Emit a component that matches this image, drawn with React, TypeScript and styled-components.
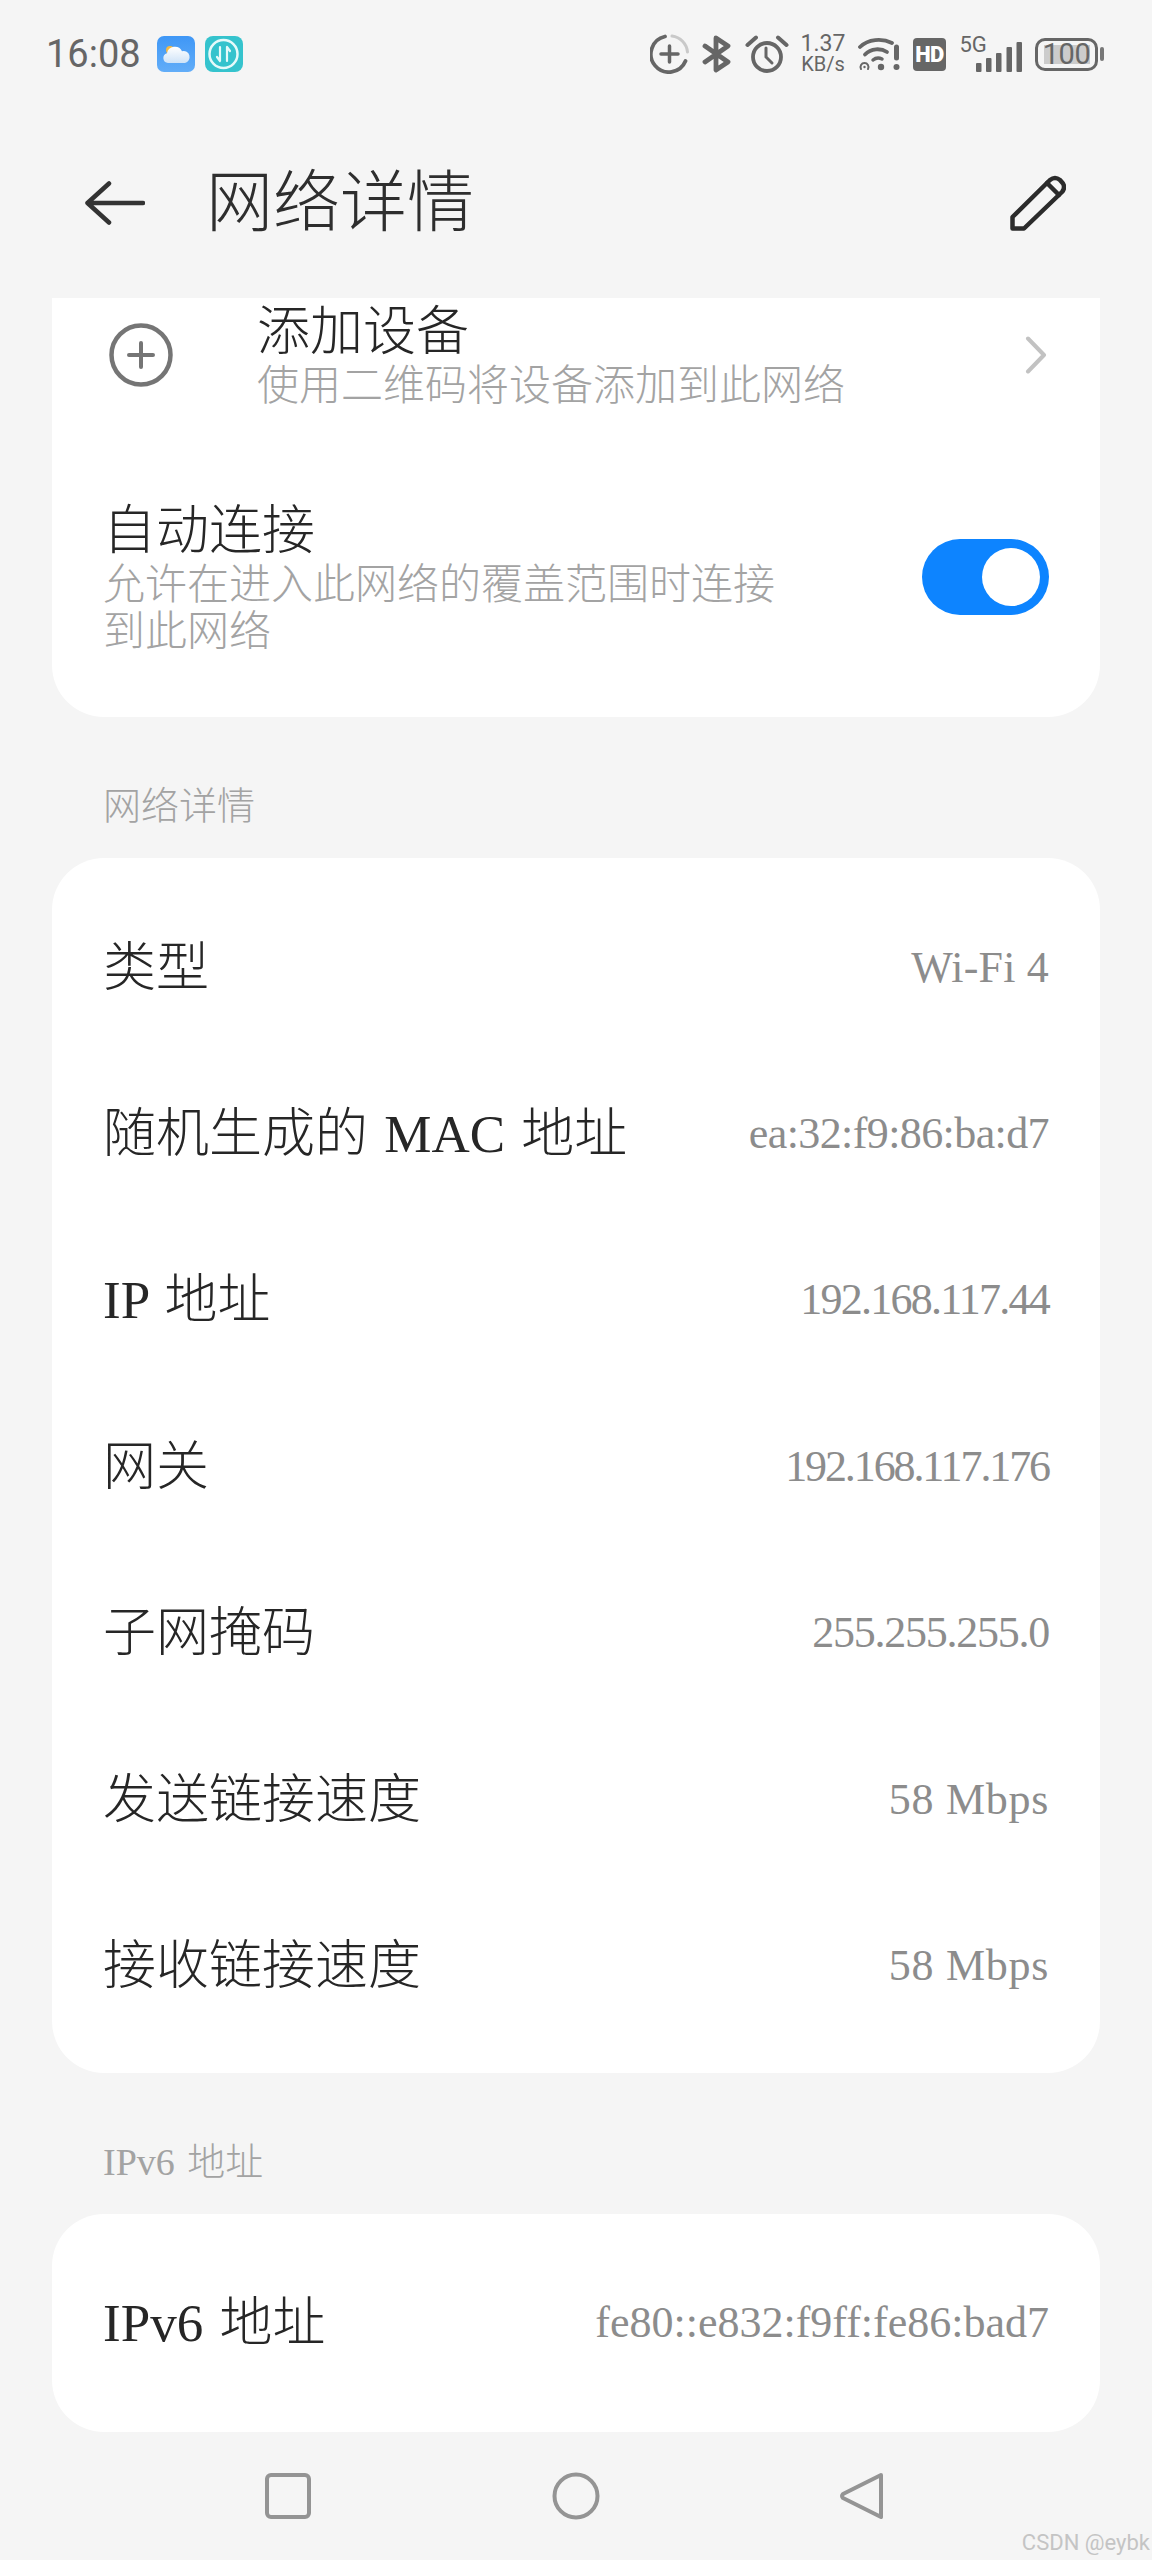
import styled, { createGlobalStyle } from 'styled-components';

type DetailRow = { label: string; value: string; tracking: number };

const detailRows: DetailRow[] = [
  { label: '类型', value: 'Wi-Fi 4', tracking: 0.2 },
  { label: '随机生成的 MAC 地址', value: 'ea:32:f9:86:ba:d7', tracking: -0.6 },
  { label: 'IP 地址', value: '192.168.117.44', tracking: -1.75 },
  { label: '网关', value: '192.168.117.176', tracking: -2.1 },
  { label: '子网掩码', value: '255.255.255.0', tracking: -1.25 },
  { label: '发送链接速度', value: '58 Mbps', tracking: 0.7 },
  { label: '接收链接速度', value: '58 Mbps', tracking: 0.7 },
];

const GlobalStyle = createGlobalStyle`
  html, body {
    margin: 0;
    padding: 0;
    background: #f5f5f5;
  }
  * {
    box-sizing: border-box;
  }
`;

export default function App() {
  return (
    <Page>
      <GlobalStyle />
      <StatusBar>
        <StatusLeft>
          <Clock>16:08</Clock>
          <WeatherIcon />
          <TransferIcon />
        </StatusLeft>
        <StatusRight>
          <RingPlusIcon />
          <BluetoothIcon />
          <AlarmIcon />
          <Speed>
            <span>1.37</span>
            <SpeedUnit>KB/s</SpeedUnit>
          </Speed>
          <WifiIcon />
          <HdBadge>HD</HdBadge>
          <Signal>
            <SignalLabel>5G</SignalLabel>
            <SignalIcon />
          </Signal>
          <Battery>
            <BatteryBody>100</BatteryBody>
            <BatteryCap />
          </Battery>
        </StatusRight>
      </StatusBar>

      <Header>
        <BackIcon />
        <Title>网络详情</Title>
        <PencilIcon />
      </Header>

      <TopCard>
        <AddRow>
          <AddIcon />
          <AddText>
            <RowTitle>添加设备</RowTitle>
            <RowSub>使用二维码将设备添加到此网络</RowSub>
          </AddText>
          <ChevronIcon />
        </AddRow>
        <AutoRow>
          <AutoText>
            <RowTitle>自动连接</RowTitle>
            <RowSub>允许在进入此网络的覆盖范围时连接到此网络</RowSub>
          </AutoText>
          <Toggle>
            <Knob />
          </Toggle>
        </AutoRow>
      </TopCard>

      <SectionLabel>网络详情</SectionLabel>
      <DetailCard>
        {detailRows.map((row) => (
          <Row key={row.label}>
            <RowLabel>{row.label}</RowLabel>
            <RowValue $tracking={row.tracking}>{row.value}</RowValue>
          </Row>
        ))}
      </DetailCard>

      <SectionLabel>IPv6 地址</SectionLabel>
      <Ipv6Card>
        <RowLabel>IPv6 地址</RowLabel>
        <RowValue $tracking={0}>fe80::e832:f9ff:fe86:bad7</RowValue>
      </Ipv6Card>

      <NavBar>
        <NavIcon viewBox="0 0 48 48">
          <rect x="3" y="3" width="42" height="42" rx="4" />
        </NavIcon>
        <NavIcon viewBox="0 0 48 48">
          <circle cx="24" cy="24" r="21.5" />
        </NavIcon>
        <NavIcon viewBox="0 0 48 48">
          <path d="M41 3 L3 22 Q1 24 3 26 L41 45 Z" strokeLinejoin="round" />
        </NavIcon>
      </NavBar>
      <Watermark>CSDN @eybk</Watermark>
    </Page>
  );
}

function WeatherIcon() {
  return (
    <AppIcon viewBox="0 0 38 36">
      <defs>
        <linearGradient id="sky" x1="0" y1="0" x2="0" y2="1">
          <stop offset="0" stopColor="#3f97f6" />
          <stop offset="1" stopColor="#62adf8" />
        </linearGradient>
        <linearGradient id="cloud" x1="0" y1="0" x2="0" y2="1">
          <stop offset="0" stopColor="#ffffff" />
          <stop offset="1" stopColor="#cfe3f7" />
        </linearGradient>
      </defs>
      <rect width="38" height="36" rx="7" fill="url(#sky)" />
      <circle cx="13" cy="14" r="4" fill="#f5b942" />
      <path
        d="M11 27 a5 5 0 0 1 -1 -9.800 a8 8 0 0 1 15 -2 a6 6 0 0 1 3 11.800 Z"
        fill="url(#cloud)"
      />
    </AppIcon>
  );
}

function TransferIcon() {
  return (
    <AppIcon viewBox="0 0 38 36">
      <rect width="38" height="36" rx="8" fill="#35c3cd" />
      <circle cx="18.500" cy="18" r="14" fill="none" stroke="#e6fafa" strokeWidth="2.500" />
      <path
        d="M15 11 v14 M15 25 l-3 -4 M22 25 v-14 M22 11 l3 4"
        fill="none"
        stroke="#e6fafa"
        strokeWidth="2.200"
        strokeLinecap="round"
      />
    </AppIcon>
  );
}

function RingPlusIcon() {
  return (
    <StatusSvg $w={39} $h={40} viewBox="0 0 39 40" fill="none" strokeLinecap="round">
      <path d="M35.500 27 A18 18 0 1 1 15 2.500" stroke="#666" strokeWidth="3.800" />
      <path d="M22 2 A18 18 0 0 1 37.500 18" stroke="#c9c9c9" strokeWidth="3" />
      <path d="M11 20 H28 M19.500 12 V28" stroke="#666" strokeWidth="3.500" />
    </StatusSvg>
  );
}

function BluetoothIcon() {
  return (
    <StatusSvg $w={29} $h={38} viewBox="0 0 29 38" fill="none" strokeLinejoin="round" strokeLinecap="round">
      <path d="M3 11 L26 27 L14 35 V3 L26 11 L3 27" stroke="#666" strokeWidth="4.800" />
    </StatusSvg>
  );
}

function AlarmIcon() {
  return (
    <StatusSvg $w={44} $h={38} viewBox="0 0 44 38" fill="none" stroke="#666" strokeLinecap="round">
      <circle cx="22" cy="22" r="14" strokeWidth="3.800" />
      <path d="M21 13 V22 L27 28" strokeWidth="3" />
      <path d="M2.500 10 L11 2.500 M41.500 10 L33 2.500" strokeWidth="4" />
    </StatusSvg>
  );
}

function WifiIcon() {
  return (
    <StatusSvg $w={42} $h={34} viewBox="0 0 42 34" fill="none" stroke="#666" strokeLinecap="round">
      <path d="M2 10 C10 2 24 1 34 6" strokeWidth="3.800" />
      <path d="M7 17.500 C13 11 23 11 29 15" strokeWidth="3.800" />
      <path d="M15 23 C18 20.500 21 20.500 24 22" strokeWidth="3.500" />
      <circle cx="23" cy="30" r="3.200" fill="#666" stroke="none" />
      <path d="M38.500 10 V21" strokeWidth="5" />
      <circle cx="38.500" cy="30" r="3" fill="#666" stroke="none" />
      <path d="M3 32 a4 4 0 1 1 7 0" strokeWidth="2" />
      <circle cx="6.500" cy="30" r="1.200" fill="#666" stroke="none" />
    </StatusSvg>
  );
}

function SignalIcon() {
  return (
    <SignalBars viewBox="0 0 46 30" fill="#666">
      <rect x="0" y="21" width="5.500" height="9" rx="1" />
      <rect x="10" y="16" width="5.500" height="14" rx="1" />
      <rect x="20" y="11" width="5.500" height="19" rx="1" />
      <rect x="30.500" y="5" width="5.500" height="25" rx="1" />
      <rect x="40.500" y="0" width="5.500" height="30" rx="1" />
    </SignalBars>
  );
}

function BackIcon() {
  return (
    <HeaderSvg $w={60} $h={44} $ml={85} viewBox="0 0 60 44" fill="none" stroke="#333" strokeWidth="4.500" strokeLinecap="round" strokeLinejoin="round">
      <path d="M2.500 22 H58 M24 2.500 L2.500 22 L24 41.500" />
    </HeaderSvg>
  );
}

function PencilIcon() {
  return (
    <HeaderSvg $w={56} $h={56} $ml={534} viewBox="0 0 56 56" fill="none" stroke="#2b2b2b" strokeWidth="4.500" strokeLinejoin="round" strokeLinecap="round">
      <path d="M2.500 53.500 V42 L40 5 Q45 1 50 5 L53 8.500 Q55.500 13 52 17 L14 53.500 Z" />
      <path d="M37 8 L49 20" />
    </HeaderSvg>
  );
}

function AddIcon() {
  return (
    <AddSvg viewBox="0 0 64 64" fill="none" stroke="#757575" strokeLinecap="round">
      <circle cx="32" cy="32" r="29.500" strokeWidth="4.500" />
      <path d="M20 32 H44 M32 20 V44" strokeWidth="4" />
    </AddSvg>
  );
}

function ChevronIcon() {
  return (
    <ChevronSvg viewBox="0 0 22 38" fill="none" stroke="#c2c2c2" strokeWidth="4" strokeLinecap="round" strokeLinejoin="round">
      <path d="M3 2.500 L19 19 L3 35.500" />
    </ChevronSvg>
  );
}

const SERIF_CJK = `"Liberation Serif", "Noto Sans CJK SC", serif`;
const SANS = `Roboto, "Noto Sans", sans-serif`;

const Page = styled.div`
  position: relative;
  width: 1152px;
  height: 2560px;
  overflow: hidden;
  background: #f5f5f5;
  font-family: ${SERIF_CJK};
`;

const StatusBar = styled.div`
  display: flex;
  align-items: center;
  justify-content: space-between;
  height: 108px;
  padding: 0 48px 0 46px;
  font-family: ${SANS};
  color: #666;
`;

const StatusLeft = styled.div`
  display: flex;
  align-items: center;
`;

const Clock = styled.span`
  width: 111px;
  font-size: 38px;
  line-height: 1;
`;

const AppIcon = styled.svg`
  display: block;
  width: 38px;
  height: 36px;
  margin-right: 10px;
`;

const StatusRight = styled.div`
  display: flex;
  align-items: center;
  gap: 13.500px;
`;

const StatusSvg = styled.svg<{ $w: number; $h: number }>`
  display: block;
  flex: none;
  width: ${(p) => p.$w}px;
  height: ${(p) => p.$h}px;
`;

const Speed = styled.div`
  display: flex;
  flex-direction: column;
  align-items: center;
  width: 42px;
  font-size: 23px;
  line-height: 20px;
`;

const SpeedUnit = styled.span`
  font-size: 20px;
`;

const HdBadge = styled.div`
  display: flex;
  align-items: center;
  justify-content: center;
  width: 33px;
  height: 33px;
  border-radius: 4px;
  background: #666;
  color: #fff;
  font-size: 22px;
  font-weight: 900;
  letter-spacing: -0.500px;
`;

const Signal = styled.div`
  display: grid;
  width: 62px;
  height: 36px;
`;

const SignalLabel = styled.span`
  grid-area: 1 / 1;
  justify-self: start;
  align-self: start;
  font-size: 22px;
  line-height: 18px;
  white-space: nowrap;
`;

const SignalBars = styled.svg`
  grid-area: 1 / 1;
  justify-self: end;
  align-self: end;
  display: block;
  width: 46px;
  height: 30px;
`;

const Battery = styled.div`
  display: flex;
  align-items: center;
  gap: 2px;
  width: 69px;
`;

const BatteryBody = styled.div`
  display: flex;
  align-items: center;
  justify-content: center;
  width: 63px;
  height: 33px;
  border: 3.500px solid #666;
  border-radius: 10px;
  background: linear-gradient(#ccc, #ccc) center / 46px 19px no-repeat;
  font-size: 29px;
  line-height: 1;
  letter-spacing: -0.500px;
  color: #666;
`;

const BatteryCap = styled.div`
  width: 4px;
  height: 14px;
  border-radius: 2px;
  background: #777;
`;

const Header = styled.div`
  display: flex;
  align-items: center;
  height: 190px;
`;

const HeaderSvg = styled.svg<{ $w: number; $h: number; $ml: number }>`
  display: block;
  flex: none;
  width: ${(p) => p.$w}px;
  height: ${(p) => p.$h}px;
  margin-left: ${(p) => p.$ml}px;
`;

const Title = styled.h1`
  width: 272px;
  margin: 0 -2px 0 61px;
  font-size: 67px;
  font-weight: 300;
  line-height: 1;
  color: #2e2e2e;
`;

const Card = styled.div`
  width: 1048px;
  margin-left: 52px;
  background: #fff;
  border-radius: 52px;
`;

const TopCard = styled(Card)`
  height: 419px;
  border-radius: 0 0 52px 52px;
`;

const AddRow = styled.div`
  display: flex;
  align-items: flex-start;
  height: 177px;
  padding: 8px 53px 0 57px;
`;

const AddSvg = styled.svg`
  display: block;
  flex: none;
  width: 64px;
  height: 64px;
  margin-top: 17px;
`;

const AddText = styled.div`
  flex: 1;
  margin-left: 84px;
`;

const RowTitle = styled.div`
  font-size: 53px;
  font-weight: 300;
  line-height: 52px;
  color: #262626;
`;

const RowSub = styled.div`
  margin-top: 5px;
  font-size: 42px;
  font-weight: 300;
  line-height: 47px;
  color: #a3a3a3;
`;

const ChevronSvg = styled.svg`
  display: block;
  flex: none;
  width: 22px;
  height: 38px;
  margin-top: 30px;
`;

const AutoRow = styled.div`
  display: flex;
  align-items: center;
  justify-content: space-between;
  padding: 30px 51px 0 51px;
`;

const AutoText = styled.div`
  width: 680px;
`;

const Toggle = styled.div`
  display: flex;
  align-items: center;
  justify-content: flex-end;
  width: 127px;
  height: 76px;
  margin-bottom: 7px;
  padding-right: 9px;
  border-radius: 38px;
  background: #0d84ff;
`;

const Knob = styled.div`
  width: 58px;
  height: 58px;
  border-radius: 50%;
  background: #fff;
`;

const SectionLabel = styled.div`
  height: 141px;
  padding: 67px 0 0 103px;
  font-size: 38px;
  font-weight: 300;
  line-height: 44px;
  word-spacing: 3px;
  color: #a3a3a3;
`;

const DetailCard = styled(Card)`
  height: 1215px;
  padding: 25px 51px 25px 51px;
`;

const Row = styled.div`
  display: flex;
  align-items: center;
  justify-content: space-between;
  height: 166.400px;
  padding-top: 3px;
`;

const RowLabel = styled.div`
  font-size: 53px;
  font-weight: 300;
  line-height: 60px;
  word-spacing: 3px;
  white-space: nowrap;
  color: #262626;
`;

const RowValue = styled.div<{ $tracking: number }>`
  font-size: 44px;
  line-height: 50px;
  letter-spacing: ${(p) => p.$tracking}px;
  white-space: nowrap;
  color: #8c8c8c;
`;

const Ipv6Card = styled(Card)`
  display: flex;
  align-items: center;
  justify-content: space-between;
  height: 218px;
  padding: 0 51px 0 51px;
`;

const NavBar = styled.div`
  display: flex;
  gap: 240px;
  padding-top: 40px;
  padding-left: 264px;
`;

const NavIcon = styled.svg`
  display: block;
  width: 48px;
  height: 48px;
  fill: none;
  stroke: #949494;
  stroke-width: 4px;
`;

const Watermark = styled.div`
  position: absolute;
  right: 2px;
  bottom: 4px;
  font-family: ${SANS};
  font-size: 22px;
  line-height: 26px;
  color: #c4c4c4;
`;
